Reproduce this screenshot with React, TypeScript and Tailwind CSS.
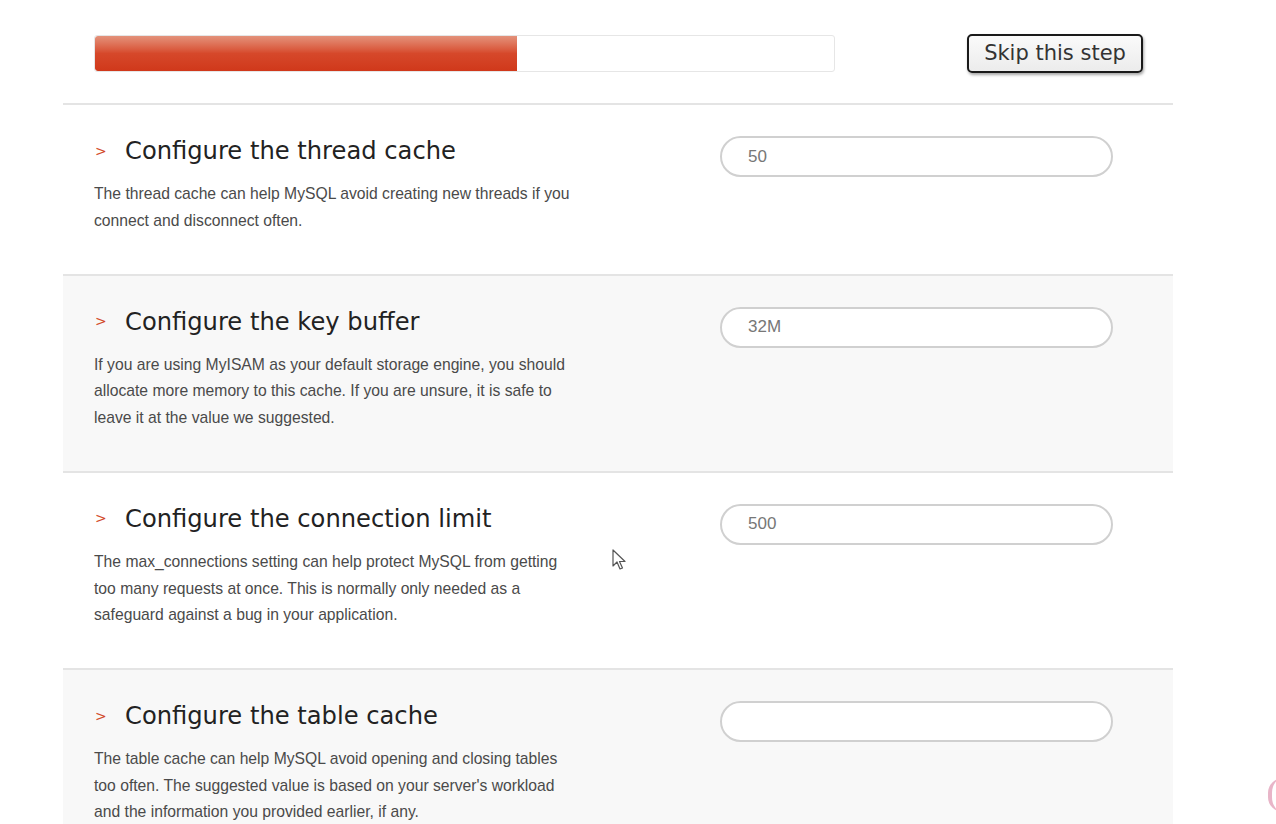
import React from "react";

const steps = [
  {
    head: "Configure the thread cache",
    value: "50",
    lines: [
      "The thread cache can help MySQL avoid creating new threads if you",
      "connect and disconnect often.",
    ],
    shaded: false,
  },
  {
    head: "Configure the key buffer",
    value: "32M",
    lines: [
      "If you are using MyISAM as your default storage engine, you should",
      "allocate more memory to this cache. If you are unsure, it is safe to",
      "leave it at the value we suggested.",
    ],
    shaded: true,
  },
  {
    head: "Configure the connection limit",
    value: "500",
    lines: [
      "The max_connections setting can help protect MySQL from getting",
      "too many requests at once. This is normally only needed as a",
      "safeguard against a bug in your application.",
    ],
    shaded: false,
  },
  {
    head: "Configure the table cache",
    value: "",
    lines: [
      "The table cache can help MySQL avoid opening and closing tables",
      "too often. The suggested value is based on your server's workload",
      "and the information you provided earlier, if any.",
    ],
    shaded: true,
  },
];

const App = () => {
  return (
    <div className="relative w-[1276px] h-[824px] overflow-hidden bg-white">
      <div className="ml-[63px] w-[1110px]">
        <div className="flex items-start pt-[35px] pl-[31px] h-[103px]">
          <div className="w-[741px] h-[37px] rounded-[3px] border border-[#e6e6e6] bg-white overflow-hidden">
            <div className="w-[422px] h-full rounded-l-[3px] bg-gradient-to-b from-[#e3917a] via-[#d6482a] to-[#d0381a]" />
          </div>
          <button className="ml-[132px] -mt-[1px] w-[176px] h-[39px] rounded-[5px] border-2 border-[#1a1a1a] bg-gradient-to-b from-[#fafafa] to-[#ececec] shadow-[1px_2px_3px_rgba(0,0,0,0.35)] font-['DejaVu_Sans',sans-serif] text-[21px] text-[#333]">
            Skip this step
          </button>
        </div>
        {steps.map((item, index) => {
          return (
            <div
              key={index}
              className={
                "flex border-t-2 border-[#e4e4e4] pl-[31px] pt-[30px] pb-[39.5px] " +
                (item.shaded ? "bg-[#f8f8f8]" : "bg-white")
              }
            >
              <div className="w-[626px]">
                <div className="flex items-center h-[32px]">
                  <span className="w-[31px] pl-[1px] font-['DejaVu_Sans',sans-serif] text-[14px] text-[#d2492a]">
                    &gt;
                  </span>
                  <span className="font-['DejaVu_Sans',sans-serif] text-[24.2px] text-[#222]">
                    {item.head}
                  </span>
                </div>
                <div className="mt-[14px] font-['Liberation_Sans',sans-serif] text-[15.7px] leading-[26.6px] text-[#4a4a4a]">
                  {item.lines.map((line, i) => (
                    <div key={i}>{line}</div>
                  ))}
                </div>
              </div>
              <div className="mt-[1px]">
                <input
                  readOnly
                  value={item.value}
                  className="w-[393px] h-[41px] rounded-full border-2 border-[#d0d0d0] bg-white pl-[26px] font-['Liberation_Sans',sans-serif] text-[17px] text-[#777] outline-none"
                />
              </div>
            </div>
          );
        })}
      </div>
      <svg
        className="absolute left-[612px] top-[549px]"
        width="16"
        height="24"
        viewBox="0 0 16 24"
      >
        <path
          d="M1 1 L1 17 L5 13 L8 20 L10.5 19 L7.5 12.5 L13 12.5 Z"
          fill="white"
          stroke="#555"
          strokeWidth="1.2"
          strokeLinejoin="round"
        />
      </svg>
      <div className="absolute left-[1268px] top-[778px] w-[30px] h-[34px] rounded-full border-l-[4px] border-[#e8b5c8]" />
    </div>
  );
};

export default App;
